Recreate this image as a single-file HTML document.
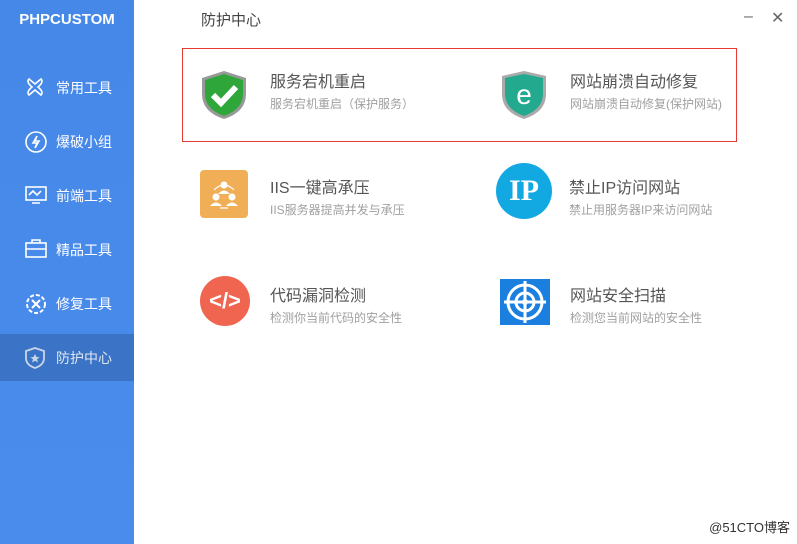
<!DOCTYPE html>
<html><head><meta charset="utf-8"><style>
*{margin:0;padding:0;box-sizing:border-box}
body{width:798px;height:544px;overflow:hidden;background:#fff;font-family:"Liberation Sans","Noto Sans CJK SC",sans-serif;position:relative}
.side{position:absolute;left:0;top:0;width:134px;height:544px;background:linear-gradient(#4688e8,#4a8cec)}
.logo{position:absolute;left:0;width:134px;top:11px;text-align:center;color:#fff;font-weight:bold;font-size:15px}
.item{position:absolute;left:0;width:134px;height:47px;color:#fff;font-size:14px}
.item span{position:absolute;left:56px;top:14px}
.item svg{position:absolute;left:24px;top:12px}
.act{background:#3b74c6;color:#dde6f2}
.title{position:absolute;left:201px;top:9px;font-size:15px;color:#444}
.win{position:absolute;top:8px;color:#666;font-size:16px}
.box{position:absolute;left:182px;top:48px;width:555px;height:94px;border:1px solid #e53935}
.c{position:absolute}
.c b{position:absolute;left:70px;top:-2px;font-weight:normal;font-size:16px;color:#555;white-space:nowrap}
.c i{position:absolute;left:70px;top:25px;font-style:normal;font-size:12px;color:#a0a0a0;white-space:nowrap}
.foot{position:absolute;right:8px;bottom:8px;font-size:13px;color:#333}
.edge{position:absolute;right:0;top:0;width:1px;height:544px;background:#ccc}
</style></head><body>
<div class="side">
<div class="logo">PHPCUSTOM</div>
<div class="item" style="top:64px"><svg width="22" height="22" viewBox="0 0 22 22" fill="none" stroke="#fff" stroke-width="1.6"><path d="M5 3 L11 8 L17 3 Q20 6 14 11 Q20 16 17 19 L11 14 L5 19 Q2 16 8 11 Q2 6 5 3Z"/></svg><span>常用工具</span></div>
<div class="item" style="top:118px"><svg width="24" height="24" viewBox="0 0 24 24" fill="none" stroke="#fff" stroke-width="1.6"><circle cx="12" cy="12" r="10"/><path d="M13 6 L9 13 H13 L11 18 L15 11 H11Z"/></svg><span>爆破小组</span></div>
<div class="item" style="top:172px"><svg width="24" height="22" viewBox="0 0 24 22" fill="none" stroke="#fff" stroke-width="1.6"><rect x="2" y="3" width="20" height="13"/><path d="M5 11 L9 7 L13 11 L17 7 M8 19 H16"/></svg><span>前端工具</span></div>
<div class="item" style="top:226px"><svg width="24" height="22" viewBox="0 0 24 22" fill="none" stroke="#fff" stroke-width="1.6"><rect x="2" y="5" width="20" height="14"/><path d="M8 5 V2 H16 V5 M2 11 H22"/></svg><span>精品工具</span></div>
<div class="item" style="top:280px"><svg width="24" height="24" viewBox="0 0 24 24" fill="none" stroke="#fff" stroke-width="2"><circle cx="12" cy="12" r="9" stroke-dasharray="4 2"/><path d="M8 8 L16 16 M16 8 L8 16"/></svg><span>修复工具</span></div>
<div class="item act" style="top:334px"><svg width="22" height="24" viewBox="0 0 22 24" fill="none" stroke="#c9d6e8" stroke-width="1.8"><path d="M11 2 L20 5 V12 Q20 19 11 22 Q2 19 2 12 V5Z"/><path d="M11 8 L12.5 11 L15.5 11.3 L13 13.3 L14 16.5 L11 14.8 L8 16.5 L9 13.3 L6.5 11.3 L9.5 11Z" fill="#c9d6e8" stroke="none"/></svg><span>防护中心</span></div>
</div>
<div class="title">防护中心</div>
<div class="win" style="left:744px">–</div>
<div class="win" style="left:771px">✕</div>
<div class="box"></div>

<div class="c" style="left:200px;top:70px"><svg width="48" height="50" viewBox="0 0 48 50"><path d="M24 1 L46 8 V24 Q46 42 24 49 Q2 42 2 24 V8Z" fill="#999"/><path d="M24 4 L43 10 V24 Q43 39 24 46 Q5 39 5 24 V10Z" fill="#2fa63a"/><path d="M13 25 L21 33 L36 17" stroke="#fff" stroke-width="6" fill="none"/></svg><b>服务宕机重启</b><i>服务宕机重启（保护服务）</i></div>
<div class="c" style="left:500px;top:70px"><svg width="48" height="50" viewBox="0 0 48 50"><path d="M24 1 L46 6 V24 Q46 42 24 49 Q2 42 2 24 V6Z" fill="#aaa"/><path d="M24 4 L43 8 V24 Q43 39 24 46 Q5 39 5 24 V8Z" fill="#22a98e"/><text x="24" y="34" text-anchor="middle" font-size="28" fill="#fff" font-family="Liberation Sans">e</text></svg><b>网站崩溃自动修复</b><i>网站崩溃自动修复(保护网站)</i></div>
<div class="c" style="left:200px;top:176px"><svg width="48" height="48" viewBox="0 0 48 48" style="position:absolute;top:-6px"><rect width="48" height="48" rx="4" fill="#f0ae56"/><g fill="#fff"><circle cx="24" cy="15" r="3.5"/><path d="M18 24 Q24 17 30 24Z"/><circle cx="16" cy="27" r="3.5"/><path d="M10 36 Q16 29 22 36Z"/><circle cx="32" cy="27" r="3.5"/><path d="M26 36 Q32 29 38 36Z"/></g><path d="M14 20 Q24 10 34 20 M20 38 H28" stroke="#fff" stroke-width="1.2" fill="none"/></svg><b>IIS一键高承压</b><i>IIS服务器提高并发与承压</i></div>
<div class="c" style="left:496px;top:176px"><div style="position:absolute;left:0;top:-13px;width:56px;height:56px;border-radius:50%;background:#12a9e2;color:#fff;font:bold 30px 'Liberation Serif',serif;text-align:center;line-height:56px">IP</div><b style="left:73px">禁止IP访问网站</b><i style="left:73px">禁止用服务器IP来访问网站</i></div>
<div class="c" style="left:200px;top:284px"><div style="position:absolute;left:0;top:-8px;width:50px;height:50px;border-radius:50%;background:#ef6550;color:#fff;font:bold 22px 'Liberation Sans',sans-serif;text-align:center;line-height:50px">&lt;/&gt;</div><b>代码漏洞检测</b><i>检测你当前代码的安全性</i></div>
<div class="c" style="left:500px;top:284px"><svg width="50" height="46" viewBox="0 0 50 46" style="position:absolute;top:-5px"><rect width="50" height="46" fill="#1b7fe0"/><g fill="none" stroke="#fff" stroke-width="3"><circle cx="25" cy="23" r="17"/><circle cx="25" cy="23" r="9"/><path d="M25 2 V44 M4 23 H46"/></g><circle cx="25" cy="23" r="3" fill="#fff"/></svg><b>网站安全扫描</b><i>检测您当前网站的安全性</i></div>
<div class="foot">@51CTO博客</div>
<div class="edge"></div>
</body></html>
